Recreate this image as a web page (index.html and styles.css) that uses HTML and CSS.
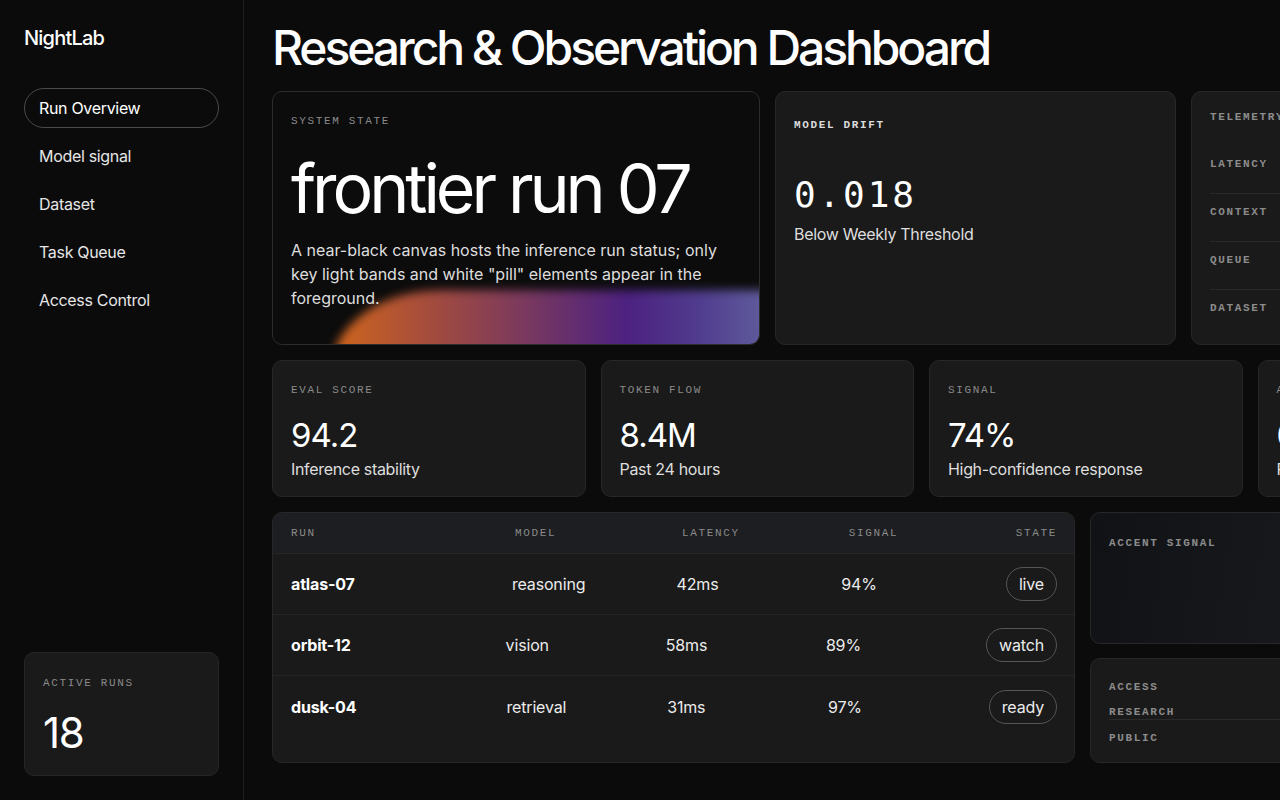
FILE: index.html
```html
<!DOCTYPE html>
<html lang="en">

<head>
  <meta charset="UTF-8">
  <title>NightLab</title>
  <link rel="stylesheet" href="styles.css">
</head>

<body>
  <div class="app">
    <aside class="sidebar">
      <div class="logo">NightLab</div>
      <nav class="nav">
        <div class="nav-item active">Run Overview</div>
        <div class="nav-item">Model signal</div>
        <div class="nav-item">Dataset</div>
        <div class="nav-item">Task Queue</div>
        <div class="nav-item">Access Control</div>
      </nav>
      <div class="side-card">
        <div class="label">Active Runs</div>
        <div class="side-value">18</div>
      </div>
    </aside>

    <main class="main">
      <h1 class="title">Research &amp; Observation Dashboard</h1>

      <!-- top row -->
      <div class="row row-top">
        <section class="card state">
          <div class="label">System State</div>
          <div class="state-name">frontier run 07</div>
          <p class="state-text">A near-black canvas hosts the inference run status; only key light bands and white "pill" elements appear in the foreground.</p>
          <div class="band"></div>
        </section>

        <section class="card drift">
          <div class="label label-strong">Model Drift</div>
          <div class="drift-value">0.018</div>
          <div class="sub">Below Weekly Threshold</div>
        </section>

        <section class="card telemetry">
          <div class="label label-bold">Telemetry</div>
          <ul class="tele-list">
            <li><span class="label label-bold">Latency</span><span class="tele-val">42ms</span></li>
            <li><span class="label label-bold">Context</span><span class="tele-val">128k</span></li>
            <li><span class="label label-bold">Queue</span><span class="tele-val">06</span></li>
            <li><span class="label label-bold">Dataset</span><span class="tele-val">v3.2</span></li>
          </ul>
        </section>
      </div>

      <!-- metrics -->
      <div class="row row-metrics">
        <section class="card metric">
          <div class="label">Eval Score</div>
          <div class="metric-value">94.2</div>
          <div class="sub">Inference stability</div>
        </section>
        <section class="card metric">
          <div class="label">Token Flow</div>
          <div class="metric-value">8.4M</div>
          <div class="sub">Past 24 hours</div>
        </section>
        <section class="card metric">
          <div class="label">Signal</div>
          <div class="metric-value">74%</div>
          <div class="sub">High-confidence response</div>
        </section>
        <section class="card metric">
          <div class="label">Alerts</div>
          <div class="metric-value">03</div>
          <div class="sub">Reviewed today</div>
        </section>
      </div>

      <!-- runs table + side -->
      <div class="row row-bottom">
        <section class="card runs">
          <div class="runs-row runs-head">
            <div class="label">Run</div>
            <div class="label">Model</div>
            <div class="label">Latency</div>
            <div class="label">Signal</div>
            <div class="label">State</div>
          </div>
          <div class="runs-row">
            <div class="run-name">atlas-07</div>
            <div>reasoning</div>
            <div>42ms</div>
            <div>94%</div>
            <div class="pill">live</div>
          </div>
          <div class="runs-row">
            <div class="run-name">orbit-12</div>
            <div>vision</div>
            <div>58ms</div>
            <div>89%</div>
            <div class="pill">watch</div>
          </div>
          <div class="runs-row">
            <div class="run-name">dusk-04</div>
            <div>retrieval</div>
            <div>31ms</div>
            <div>97%</div>
            <div class="pill">ready</div>
          </div>
        </section>

        <div class="side-col">
          <section class="card accent">
            <div class="label label-bold">Accent Signal</div>
          </section>
          <section class="card access">
            <div class="label label-bold">Access</div>
            <div class="label label-bold access-item line">Research</div>
            <div class="label label-bold access-item">Public</div>
          </section>
        </div>
      </div>
    </main>
  </div>
</body>

</html>
```

FILE: styles.css
```css
* {
  box-sizing: border-box;
}

body {
  margin: 0;
  background: #0b0b0b;
  color: #fff;
  font-family: Inter, "Noto Sans", sans-serif;
}

.app {
  display: flex;
  height: 800px;
  overflow: hidden;
}

/* sidebar */
.sidebar {
  width: 244px;
  flex: none;
  border-right: 1px solid #1f1f1f;
  padding: 26px 24px 24px;
  display: flex;
  flex-direction: column;
}

.logo {
  font-size: 20px;
  font-weight: 500;
  letter-spacing: -0.04em;
  line-height: 24px;
}

.nav {
  margin-top: 38px;
  display: flex;
  flex-direction: column;
  gap: 8px;
}

.nav-item {
  height: 40px;
  line-height: 38px;
  padding: 0 14px;
  font-size: 16px;
  letter-spacing: -0.02em;
  color: #e6e6e6;
  border: 1px solid transparent;
  border-radius: 20px;
}

.nav-item.active {
  color: #fff;
  border-color: #4a4a4a;
}

.side-card {
  margin-top: auto;
  height: 124px;
  background: #1a1a1a;
  border: 1px solid #262626;
  border-radius: 10px;
  padding: 23px 18px;
}

.side-value {
  margin-top: 22px;
  font-size: 42px;
  line-height: 42px;
  letter-spacing: -0.03em;
}

/* labels */
.label {
  font-family: "Liberation Mono", monospace;
  font-size: 11px;
  line-height: 14px;
  letter-spacing: 0.15em;
  text-transform: uppercase;
  color: #8a8a8a;
}

.label-bold {
  font-weight: bold;
  color: #8c8c8c;
}

.label-strong {
  font-weight: bold;
  color: #dcdcdc;
}

/* main */
.main {
  flex: 1;
  min-width: 0;
  padding: 23px 0 0 28px;
  overflow: hidden;
}

.title {
  margin: 0 0 18px;
  font-size: 48px;
  line-height: 50px;
  font-weight: 500;
  letter-spacing: -0.064em;
  white-space: nowrap;
}

.row {
  display: flex;
  gap: 15px;
  margin-bottom: 15px;
}

.card {
  flex: none;
  position: relative;
  background: #1a1a1a;
  border: 1px solid #272727;
  border-radius: 10px;
  overflow: hidden;
}

/* top row */
.row-top .card {
  height: 254px;
}

.state {
  width: 488px;
  background: #0c0c0c;
  border-color: #2c2c2c;
  padding: 22px 18px;
}

.state-name {
  margin-top: 20px;
  font-size: 68px;
  line-height: 80px;
  font-weight: 400;
  letter-spacing: -0.06em;
  white-space: nowrap;
}

.state-text {
  position: relative;
  z-index: 1;
  margin: 10px 0 0;
  font-size: 16px;
  line-height: 24px;
  color: #dedede;
}

.band {
  position: absolute;
  left: 58px;
  right: -20px;
  bottom: -30px;
  height: 84px;
  border-top-left-radius: 110px 80px;
  background: linear-gradient(90deg, #d0661c 0%, #a84e3a 20%, #7c3a5c 42%, #4c2180 66%, #503c8e 82%, #62629e 100%);
  filter: blur(5px);
}

.drift {
  width: 401px;
  padding: 26px 18px;
}

.drift-value {
  margin-top: 41px;
  font-family: "DejaVu Sans Mono", monospace;
  font-size: 36px;
  line-height: 44px;
  letter-spacing: 0.08em;
}

.sub {
  font-size: 16px;
  line-height: 22px;
  letter-spacing: -0.02em;
  color: #dedede;
}

.drift .sub {
  margin-top: 6px;
}

.telemetry {
  width: 320px;
  padding: 18px 18px;
}

.tele-list {
  list-style: none;
  margin: 22px 0 0;
  padding: 0;
}

.tele-list li {
  display: flex;
  justify-content: space-between;
  padding: 11px 0 22px;
  border-bottom: 1px solid #2a2a2a;
}

.tele-list li:last-child {
  border-bottom: none;
}

.tele-val {
  font-size: 14px;
  line-height: 14px;
  color: #eee;
}

/* metrics */
.metric {
  width: 313.5px;
  height: 137px;
  padding: 22px 18px;
}

.metric-value {
  margin-top: 20px;
  font-size: 33px;
  line-height: 36px;
  letter-spacing: -0.03em;
}

.metric .sub {
  margin-top: 5px;
}

/* runs */
.row-bottom {
  margin-bottom: 0;
}

.runs {
  width: 803px;
  height: 251px;
}

.runs-row {
  display: grid;
  grid-template-columns: 1.4fr 1fr 1fr 1fr auto;
  column-gap: 24px;
  align-items: center;
  height: 61px;
  padding: 0 17px 0 18px;
  border-bottom: 1px solid #262626;
  font-size: 16px;
  letter-spacing: -0.01em;
  color: #ececec;
}

.runs-row:last-child {
  border-bottom: none;
}

.runs-head {
  height: 41px;
  background: #1d1e21;
}

.run-name {
  font-weight: 700;
  color: #fff;
}

.pill {
  justify-self: end;
  height: 34px;
  line-height: 32px;
  padding: 0 12px;
  border: 1px solid #565656;
  border-radius: 17px;
}

.side-col {
  display: flex;
  flex-direction: column;
  gap: 14px;
}

.accent {
  width: 300px;
  height: 132px;
  padding: 23px 18px;
  background: linear-gradient(100deg, #111215 0%, #1b1c1f 100%);
}

.access {
  width: 300px;
  height: 105px;
  padding: 21px 18px;
}

.access-item {
  margin-top: 11px;
}

.access-item.line {
  border-bottom: 1px solid #2a2a2a;
}
```
